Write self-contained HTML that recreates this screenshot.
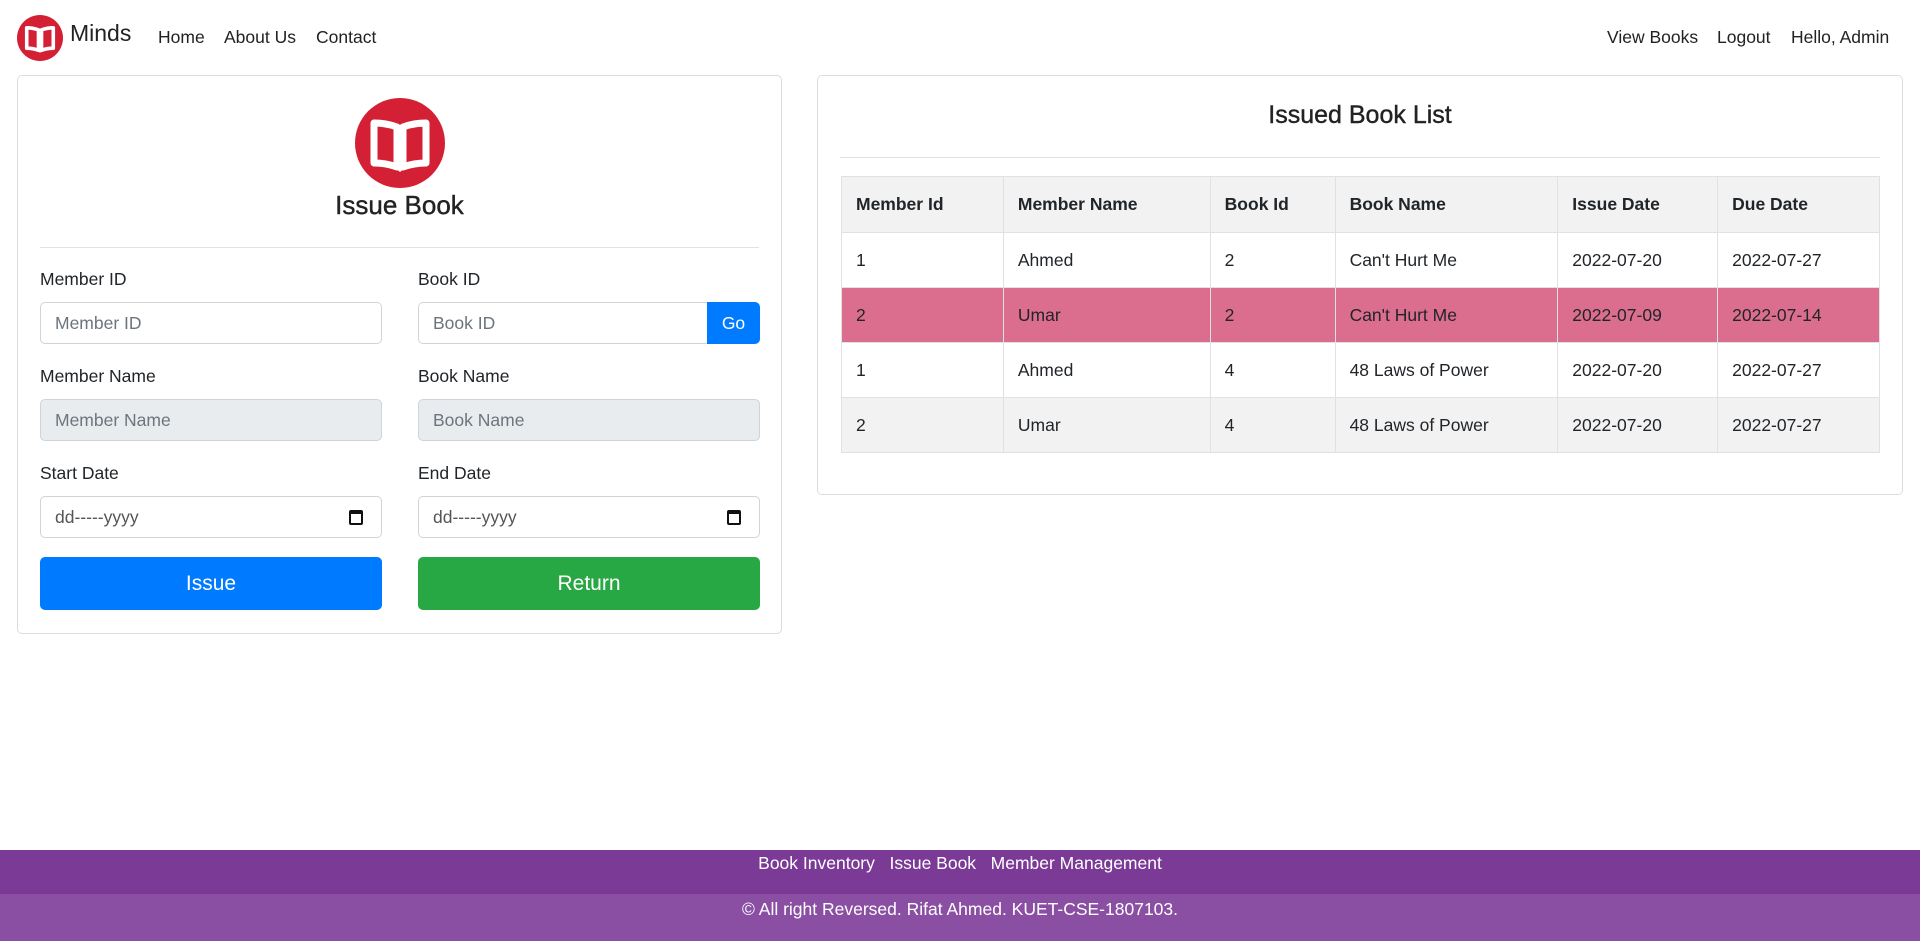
<!DOCTYPE html>
<html><head><meta charset="utf-8"><style>
*{box-sizing:border-box;margin:0;padding:0}
body{width:1920px;height:941px;position:relative;overflow:hidden;background:#fff;font-family:"Liberation Sans",sans-serif;color:#212529;font-size:17px}
.a{position:absolute}
.nav{font-size:17.5px;color:#222;top:27px}
.card{border:1px solid #dcdcdc;border-radius:5px}
.lbl{font-size:17.5px;color:#212529}
.inp{border:1px solid #ced4da;border-radius:5px;height:42px;padding-left:14px;line-height:40px;color:#6c757d;font-size:17.5px;background:#fff}
.dis{background:#e9ecef}
.btn{border-radius:5px;color:#fff;font-size:21px;text-align:center;line-height:53px;height:53px}
table{border-collapse:collapse;font-size:17.5px}
td,th{border:1px solid #dee2e6;text-align:left;padding:0 14px;height:55px}
th{height:56px;font-weight:bold}
.cal{position:absolute;right:18px;top:13px;width:14px;height:15px;border:2px solid #111;border-top-width:4px;border-radius:2px}
</style></head><body>
<svg class="a" style="left:17px;top:15px" width="46" height="46" viewBox="0 0 90 90"><circle cx="45" cy="45" r="45" fill="#d42035"/><path d="M19 25 Q31 25 42 29 L42 69 Q31 65 19 65 Z M48 29 Q59 25 71 25 L71 65 Q59 65 48 69 Z" fill="none" stroke="#fff" stroke-width="7" stroke-linejoin="round"/><path d="M40 70 L45 74 L50 70 Z" fill="#fff"/></svg>
<div class="a" style="left:70px;top:20px;font-size:23px;color:#222">Minds</div>
<div class="a nav" style="left:158px">Home</div>
<div class="a nav" style="left:224px">About Us</div>
<div class="a nav" style="left:316px">Contact</div>
<div class="a nav" style="left:1607px">View Books</div>
<div class="a nav" style="left:1717px">Logout</div>
<div class="a nav" style="left:1791px">Hello, Admin</div>

<div class="a card" style="left:17px;top:75px;width:765px;height:559px"></div>
<svg class="a" style="left:355px;top:98px" width="90" height="90" viewBox="0 0 90 90"><circle cx="45" cy="45" r="45" fill="#d42035"/><path d="M19 25 Q31 25 42 29 L42 69 Q31 65 19 65 Z M48 29 Q59 25 71 25 L71 65 Q59 65 48 69 Z" fill="none" stroke="#fff" stroke-width="7" stroke-linejoin="round"/><path d="M40 70 L45 74 L50 70 Z" fill="#fff"/></svg>
<div class="a" style="left:17px;width:765px;top:190px;text-align:center;font-size:26px;color:#222;-webkit-text-stroke:0.4px #222">Issue Book</div>
<div class="a" style="left:40px;top:247px;width:719px;height:1px;background:#e2e2e2"></div>

<div class="a lbl" style="left:40px;top:269px">Member ID</div>
<div class="a lbl" style="left:418px;top:269px">Book ID</div>
<div class="a inp" style="left:40px;top:302px;width:342px">Member ID</div>
<div class="a inp" style="left:418px;top:302px;width:291px;border-radius:5px 0 0 5px">Book ID</div>
<div class="a" style="left:707px;top:302px;width:53px;height:42px;background:#007bff;color:#fff;border-radius:0 5px 5px 0;text-align:center;line-height:42px;font-size:17.5px">Go</div>

<div class="a lbl" style="left:40px;top:366px">Member Name</div>
<div class="a lbl" style="left:418px;top:366px">Book Name</div>
<div class="a inp dis" style="left:40px;top:399px;width:342px">Member Name</div>
<div class="a inp dis" style="left:418px;top:399px;width:342px">Book Name</div>

<div class="a lbl" style="left:40px;top:463px">Start Date</div>
<div class="a lbl" style="left:418px;top:463px">End Date</div>
<div class="a inp" style="left:40px;top:496px;width:342px;color:#555">dd-----yyyy<span class="cal"></span></div>
<div class="a inp" style="left:418px;top:496px;width:342px;color:#555">dd-----yyyy<span class="cal"></span></div>

<div class="a btn" style="left:40px;top:557px;width:342px;background:#007bff">Issue</div>
<div class="a btn" style="left:418px;top:557px;width:342px;background:#28a745">Return</div>

<div class="a card" style="left:817px;top:75px;width:1086px;height:420px"></div>
<div class="a" style="left:817px;width:1086px;top:101px;text-align:center;font-size:25px;color:#222;-webkit-text-stroke:0.4px #222">Issued Book List</div>
<div class="a" style="left:840px;top:157px;width:1040px;height:1px;background:#e2e2e2"></div>
<table class="a" style="left:841px;top:176px;width:1039px">
<colgroup><col style="width:162px"><col style="width:207px"><col style="width:125px"><col style="width:223px"><col style="width:160px"><col style="width:162px"></colgroup>
<tr style="background:#f2f2f2"><th>Member Id</th><th>Member Name</th><th>Book Id</th><th>Book Name</th><th>Issue Date</th><th>Due Date</th></tr>
<tr><td>1</td><td>Ahmed</td><td>2</td><td>Can't Hurt Me</td><td>2022-07-20</td><td>2022-07-27</td></tr>
<tr style="background:#db6e8e"><td>2</td><td>Umar</td><td>2</td><td>Can't Hurt Me</td><td>2022-07-09</td><td>2022-07-14</td></tr>
<tr><td>1</td><td>Ahmed</td><td>4</td><td>48 Laws of Power</td><td>2022-07-20</td><td>2022-07-27</td></tr>
<tr style="background:#f2f2f2"><td>2</td><td>Umar</td><td>4</td><td>48 Laws of Power</td><td>2022-07-20</td><td>2022-07-27</td></tr>
</table>

<div class="a" style="left:0;top:850px;width:1920px;height:44px;background:#7a3a96"></div>
<div class="a" style="left:0;top:894px;width:1920px;height:47px;background:#8a4fa3"></div>
<div class="a" style="left:0;width:1920px;top:853px;text-align:center;color:#fff;font-size:17.5px">Book Inventory&nbsp;&nbsp; Issue Book&nbsp;&nbsp; Member Management</div>
<div class="a" style="left:0;width:1920px;top:899px;text-align:center;color:#fff;font-size:17.5px">© All right Reversed. Rifat Ahmed. KUET-CSE-1807103.</div>
</body></html>
